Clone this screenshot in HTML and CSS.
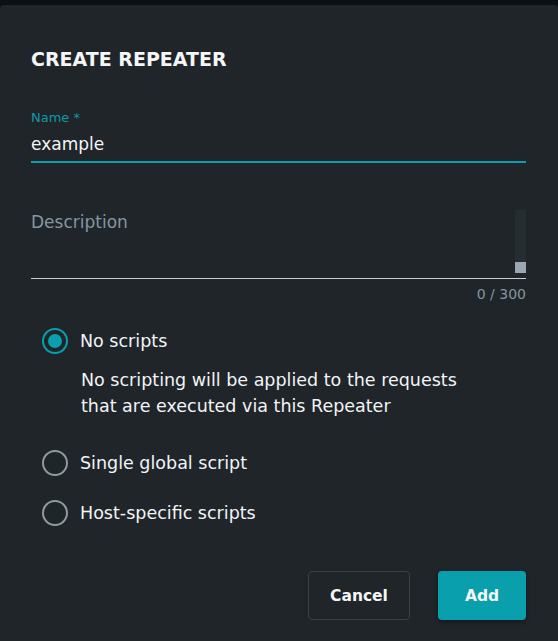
FILE: index.html
```html
<!DOCTYPE html>
<html lang="en">
<head>
<meta charset="utf-8">
<title>Create Repeater</title>
<link rel="stylesheet" href="styles.css">
</head>
<body>
<div class="dialog">
  <h1 class="title">CREATE REPEATER</h1>

  <div class="field field-name">
    <label class="field-label">Name *</label>
    <div class="field-value">example</div>
  </div>

  <div class="field field-desc">
    <div class="desc-area">
      <span class="placeholder">Description</span>
      <div class="scrollbar"><div class="thumb"></div></div>
    </div>
    <div class="counter">0 / 300</div>
  </div>

  <div class="options">
    <div class="option">
      <span class="radio checked"><span class="dot"></span></span>
      <span class="option-label">No scripts</span>
    </div>
    <p class="option-help">No scripting will be applied to the requests<br>that are executed via this Repeater</p>
    <div class="option option-spaced">
      <span class="radio"></span>
      <span class="option-label">Single global script</span>
    </div>
    <div class="option">
      <span class="radio"></span>
      <span class="option-label">Host-specific scripts</span>
    </div>
  </div>

  <div class="actions">
    <button class="btn btn-cancel">Cancel</button>
    <button class="btn btn-add">Add</button>
  </div>
</div>
</body>
</html>
```

FILE: styles.css
```css
html, body {
  margin: 0;
  padding: 0;
  background: #0d1012;
  height: 100%;
}
body {
  padding-top: 5px;
  box-sizing: border-box;
  font-family: "DejaVu Sans", "Noto Sans", sans-serif;
  color: #f2f4f5;
}
.dialog {
  background: #1f2529;
  border-radius: 4px 4px 0 0;
  height: 636px;
  box-sizing: border-box;
  padding: 40px 32px 0 31px;
}
.title {
  margin: 0;
  font-size: 19px;
  font-weight: 700;
  line-height: 28px;
  color: #f4f6f7;
}
.field-name {
  margin-top: 38px;
  border-bottom: 2px solid #0a9fac;
  padding-bottom: 5px;
}
.field-label {
  display: block;
  font-size: 13px;
  line-height: 14px;
  color: #0f98a6;
}
.field-value {
  margin-top: 7px;
  font-size: 17px;
  line-height: 24px;
  color: #f4f6f7;
}
.field-desc {
  margin-top: 47px;
}
.desc-area {
  display: flex;
  justify-content: space-between;
  align-items: flex-start;
  border-bottom: 1px solid #c9cccd;
  height: 68px;
}
.placeholder {
  font-size: 17px;
  line-height: 24px;
  color: #8795a0;
}
.scrollbar {
  width: 11px;
  height: 63px;
  background: #262d31;
  display: flex;
  flex-direction: column;
  justify-content: flex-end;
}
.thumb {
  height: 11px;
  background: #9aa7b0;
}
.counter {
  text-align: right;
  font-size: 14px;
  line-height: 16px;
  margin-top: 7px;
  color: #8795a0;
}
.options {
  margin-top: 24px;
  padding-left: 11px;
}
.option {
  display: flex;
  align-items: center;
  height: 30px;
  gap: 12px;
}
.option + .option {
  margin-top: 20px;
}
.radio {
  width: 26px;
  height: 26px;
  border: 2px solid #8e9aa2;
  border-radius: 50%;
  box-sizing: border-box;
  display: flex;
  align-items: center;
  justify-content: center;
  flex: none;
}
.radio.checked {
  border-color: #0a9fac;
}
.dot {
  width: 14px;
  height: 14px;
  border-radius: 50%;
  background: #0a9fac;
}
.option-label {
  font-size: 17.5px;
  line-height: 24px;
}
.option-help {
  margin: 11px 0 0 39px;
  font-size: 17.5px;
  line-height: 26px;
  color: #f2f4f5;
}
.option-spaced {
  margin-top: 29px;
}
.actions {
  display: flex;
  justify-content: flex-end;
  gap: 28px;
  margin-top: 43px;
}
.btn {
  font-family: inherit;
  font-size: 15.5px;
  font-weight: 700;
  height: 49px;
  border-radius: 4px;
  color: #f4f6f7;
  cursor: pointer;
}
.btn-cancel {
  width: 102px;
  background: transparent;
  border: 1px solid #3b4145;
}
.btn-add {
  width: 88px;
  background: #0a9fac;
  border: none;
  box-shadow: 0 2px 4px rgba(0,0,0,0.35);
}
```
